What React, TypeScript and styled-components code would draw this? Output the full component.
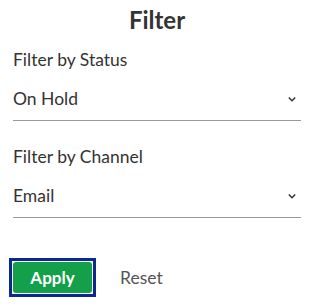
import React, { useState } from 'react';
import styled, { createGlobalStyle } from 'styled-components';

const GlobalStyle = createGlobalStyle`
  body {
    margin: 0;
    background: #ffffff;
    font-family: Lato, "Open Sans", sans-serif;
    color: #333333;
  }
`;

const Panel = styled.div`
  width: 316px;
  height: 304px;
  box-sizing: border-box;
  padding: 4px 15px 0 13px;
  display: flex;
  flex-direction: column;
`;

const Title = styled.h2`
  margin: 0;
  font-size: 24px;
  font-weight: 700;
  line-height: 32px;
  text-align: center;
  color: #333333;
`;

const Field = styled.div`
  display: flex;
  flex-direction: column;
  margin-top: ${(p: { $top: number }) => p.$top}px;
`;

const Label = styled.label`
  font-size: 17.5px;
  line-height: 20px;
  color: #333333;
`;

const SelectBox = styled.div`
  position: relative;
  margin-top: 18px;
  padding-bottom: 10px;
  border-bottom: 1px solid #9a9a9a;
`;

const Select = styled.select`
  appearance: none;
  display: block;
  width: 100%;
  height: 22px;
  border: none;
  outline: none;
  background: transparent;
  padding: 0;
  font-family: Lato, sans-serif;
  font-size: 17.5px;
  line-height: 22px;
  color: #333333;
`;

const Chevron = styled.svg`
  position: absolute;
  right: 4px;
  top: 7px;
  pointer-events: none;
`;

const Actions = styled.div`
  display: flex;
  align-items: center;
  gap: 24px;
  margin-top: 40px;
  margin-left: -4px;
`;

const ApplyButton = styled.button`
  width: 87px;
  height: 39px;
  box-sizing: border-box;
  border: 3px solid #0b2a8c;
  padding: 1px;
  background: #ffffff;
  cursor: pointer;
  display: flex;

  span {
    flex: 1;
    display: flex;
    align-items: center;
    justify-content: center;
    background: #14a04b;
    border-radius: 3px;
    color: #ffffff;
    font-family: Lato, sans-serif;
    font-weight: 700;
    font-size: 17px;
  }
`;

const ResetButton = styled.button`
  border: none;
  background: none;
  padding: 0;
  font-family: Lato, sans-serif;
  font-size: 17.5px;
  color: #555555;
  cursor: pointer;
`;

const Dropdown = ({ value, options, onChange }: { value: string; options: string[]; onChange: (v: string) => void }) => (
  <SelectBox>
    <Select value={value} onChange={(e) => onChange(e.target.value)}>
      {options.map((o) => (
        <option key={o}>{o}</option>
      ))}
    </Select>
    <Chevron width="10" height="8" viewBox="0 0 10 8">
      <path d="M1.8 2.5 L5 5.7 L8.2 2.5" fill="none" stroke="#333" strokeWidth="1.5" />
    </Chevron>
  </SelectBox>
);

const App = () => {
  const [status, setStatus] = useState('On Hold');
  const [channel, setChannel] = useState('Email');

  return (
    <>
      <GlobalStyle />
      <Panel>
        <Title>Filter</Title>
        <Field $top={14}>
          <Label>Filter by Status</Label>
          <Dropdown value={status} options={['All', 'Open', 'On Hold', 'Closed']} onChange={setStatus} />
        </Field>
        <Field $top={26}>
          <Label>Filter by Channel</Label>
          <Dropdown value={channel} options={['All', 'Email', 'Phone', 'Chat']} onChange={setChannel} />
        </Field>
        <Actions>
          <ApplyButton>
            <span>Apply</span>
          </ApplyButton>
          <ResetButton onClick={() => { setStatus('All'); setChannel('All'); }}>Reset</ResetButton>
        </Actions>
      </Panel>
    </>
  );
};

export default App;
